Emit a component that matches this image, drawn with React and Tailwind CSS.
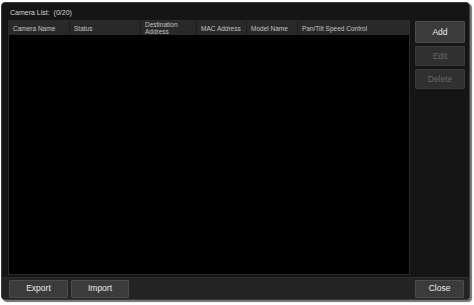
const columns = [
  { label: 'Camera Name', w: 'w-[61px]' },
  { label: 'Status', w: 'w-[71px]' },
  { label: 'Destination Address', w: 'w-[56px]' },
  { label: 'MAC Address', w: 'w-[50px]' },
  { label: 'Model Name', w: 'w-[51px]' },
  { label: 'Pan/Tilt Speed Control', w: 'flex-1' },
];

function Btn({ children, disabled, className = '' }) {
  return (
    <button
      className={
        'flex items-center justify-center rounded-[1px] border text-[8.5px] ' +
        (disabled
          ? 'border-[#3a3a3a] bg-[#303030] text-[#666666] '
          : 'border-[#4c4c4c] bg-[#3b3b3b] text-[#ececec] ') +
        className
      }
    >
      {children}
    </button>
  );
}

export default function App() {
  return (
    <div
      className="h-[305px] w-[474px] bg-white pl-[1px] pt-[2px]"
      style={{ fontFamily: '"Liberation Sans", Arial, sans-serif' }}
    >
      <div className="flex h-[298px] w-[469px] flex-col overflow-hidden rounded-[4px] border border-[#3a3a3a] bg-[#151515] shadow-[2px_2px_1px_rgba(0,0,0,0.55)]">
        {/* Title */}
        <div className="flex h-[17px] items-end pb-[2px] pl-[8px] text-[7px] text-[#d6d6d6]">
          Camera List:&nbsp; (0/20)
        </div>

        {/* Main */}
        <div className="flex flex-1">
          <div className="ml-[6px] flex w-[402px] flex-col border border-[#2c2c2c] bg-black">
            <div className="flex h-[14px] bg-[#292929] text-[6.5px] leading-[7px] text-[#c2c2c2]">
              {columns.map((c, i) => (
                <div
                  key={c.label}
                  className={
                    'flex items-center px-[4px] ' +
                    c.w +
                    (i < columns.length - 1 ? ' border-r border-[#1e1e1e]' : '')
                  }
                >
                  {c.label}
                </div>
              ))}
            </div>
            <div className="flex-1" />
          </div>

          <div className="ml-[5px] flex w-[50px] flex-col gap-[3px] pt-[1px]">
            <Btn className="h-[22px]">Add</Btn>
            <Btn disabled className="h-[20px]">Edit</Btn>
            <Btn disabled className="h-[20px]">Delete</Btn>
          </div>
        </div>

        {/* Bottom bar */}
        <div className="mt-[2px] flex h-[22px] items-center border-t border-[#2e2e2e] bg-[#232323] pl-[7px] pr-[5px]">
          <Btn className="h-[18px] w-[59px]">Export</Btn>
          <Btn className="ml-[3px] h-[18px] w-[58px]">Import</Btn>
          <div className="flex-1" />
          <Btn className="h-[18px] w-[49px]">Close</Btn>
        </div>
      </div>
    </div>
  );
}
